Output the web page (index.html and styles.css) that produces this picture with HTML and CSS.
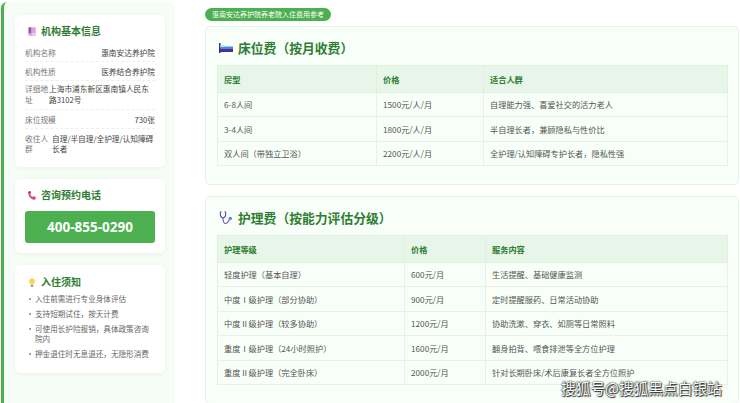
FILE: index.html
```html
<!DOCTYPE html>
<html lang="zh-CN">
<head>
  <meta charset="UTF-8">
  <title>惠南安达养护院养老院入住费用参考</title>
  <link rel="stylesheet" href="styles.css">
</head>
<body>
  <div class="page">
    <aside class="sidebar">
      <div class="side-card info-card">
        <h3 class="side-title">
          <svg class="side-icon" viewBox="0 0 12 12"><rect x="1.5" y="1" width="9" height="10" rx="1" fill="#d8a6dc"/><rect x="2" y="1" width="3" height="7" fill="#8e5aa8"/><rect x="6" y="8" width="4" height="2" fill="#f0d4f0"/></svg>
          机构基本信息
        </h3>
        <div class="info-row"><span class="info-label">机构名称</span><span class="info-value">惠南安达养护院</span></div>
        <div class="info-row"><span class="info-label">机构性质</span><span class="info-value">医养结合养护院</span></div>
        <div class="info-row wrap"><span class="info-label short">详细地址</span><span class="info-value">上海市浦东新区惠南镇人民东路3102号</span></div>
        <div class="info-row"><span class="info-label">床位规模</span><span class="info-value">730张</span></div>
        <div class="info-row wrap last"><span class="info-label short">收住人群</span><span class="info-value">自理/半自理/全护理/认知障碍长者</span></div>
      </div>

      <div class="side-card phone-card">
        <h3 class="side-title">
          <svg class="side-icon" viewBox="0 0 12 12"><path d="M2.2 1.2 4 .8l1 2.6-1.2 1c.5 1.4 1.6 2.6 3 3.3l1.2-1 2.6 1.4-.5 2.4c-.2.6-.8.8-1.4.7C4.600 10.400 1.800 7 1.300 2.600c-.1-.6.300-1.200.9-1.400z" fill="#e0457e"/><path d="M2.200 1.200 4 .8l.6 1.500-2.500.8c-.1-.9 0-1.700.1-1.900z" fill="#7a3b52"/></svg>
          咨询预约电话
        </h3>
        <div class="phone-number">400-855-0290</div>
      </div>

      <div class="side-card notice-card">
        <h3 class="side-title">
          <svg class="side-icon" viewBox="0 0 12 12"><path d="M6 .8a3.700 3.700 0 0 0-2.200 6.600c.5.4.6 1 .6 1.400h3.200c0-.4.1-1 .6-1.400A3.700 3.700 0 0 0 6 .8z" fill="#fbd25a"/><rect x="4.500" y="9" width="3" height="2.200" rx=".7" fill="#8f7bb5"/></svg>
          入住须知
        </h3>
        <ul class="notice-list">
          <li>入住前需进行专业身体评估</li>
          <li>支持短期试住，按天计费</li>
          <li>可使用长护险报销，具体政策咨询院内</li>
          <li>押金退住时无息退还，无隐形消费</li>
        </ul>
      </div>
    </aside>

    <main class="content">
      <div class="tag">惠南安达养护院养老院入住费用参考</div>

      <section class="fee-section">
        <h2 class="fee-title">
          <svg class="fee-icon" viewBox="0 0 14 10"><rect x="0" y="0" width="1.500" height="10" fill="#3d2a78"/><rect x="1" y="5" width="13" height="4" fill="#4b2f8f"/><rect x="1.500" y="3.500" width="12.500" height="2.500" rx=".6" fill="#3f8fe0"/><rect x="1.500" y="2" width="4" height="2" rx=".8" fill="#bfe0f5"/></svg>
          床位费（按月收费）
        </h2>
        <table class="fee-table bed-table">
          <thead>
            <tr><th>房型</th><th>价格</th><th>适合人群</th></tr>
          </thead>
          <tbody>
            <tr><td>6-8人间</td><td>1500元/人/月</td><td>自理能力强、喜爱社交的活力老人</td></tr>
            <tr><td>3-4人间</td><td>1800元/人/月</td><td>半自理长者，兼顾隐私与性价比</td></tr>
            <tr><td>双人间（带独立卫浴）</td><td>2200元/人/月</td><td>全护理/认知障碍专护长者，隐私性强</td></tr>
          </tbody>
        </table>
      </section>

      <section class="fee-section">
        <h2 class="fee-title">
          <svg class="fee-icon tall" viewBox="0 0 14 14"><path d="M2.500 1H1.500C1 3.500 1.200 6.500 4 7c2.800-.5 3-3.500 2.500-6h-1" fill="none" stroke="#5a46a8" stroke-width="1.100"/><path d="M4 7c0 3 .5 5.500 2.800 5.500S9.500 10 10.500 8.500" fill="none" stroke="#6a56b8" stroke-width="1.100"/><circle cx="11.300" cy="7.400" r="1.700" fill="#3f8fe0"/></svg>
          护理费（按能力评估分级）
        </h2>
        <table class="fee-table care-table">
          <thead>
            <tr><th>护理等级</th><th>价格</th><th>服务内容</th></tr>
          </thead>
          <tbody>
            <tr><td>轻度护理（基本自理）</td><td>600元/月</td><td>生活提醒、基础健康监测</td></tr>
            <tr><td>中度Ⅰ级护理（部分协助）</td><td>900元/月</td><td>定时提醒服药、日常活动协助</td></tr>
            <tr><td>中度Ⅱ级护理（较多协助）</td><td>1200元/月</td><td>协助洗漱、穿衣、如厕等日常照料</td></tr>
            <tr><td>重度Ⅰ级护理（24小时照护）</td><td>1600元/月</td><td>翻身拍背、喂食排泄等全方位护理</td></tr>
            <tr><td>重度Ⅱ级护理（完全卧床）</td><td>2000元/月</td><td>针对长期卧床/术后康复长者全方位照护</td></tr>
          </tbody>
        </table>
      </section>
    </main>
  </div>
  <div class="watermark">搜狐号@搜狐黑点白银站</div>
</body>
</html>
```

FILE: styles.css
```css
html, body {
  margin: 0;
  height: 403px;
  overflow: hidden;
  background-color: #fff;
}

body {
  font-family: "Noto Sans CJK SC", "Noto Sans", sans-serif;
  color: #555;
  position: relative;
  text-spacing-trim: space-all;
}

.page {
  display: flex;
  align-items: flex-start;
  gap: 30px;
  padding-left: 1px;
}

/* sidebar */
.sidebar {
  width: 174px;
  height: 408px;
  flex-shrink: 0;
  margin-top: 2px;
  padding: 13px 10px 0 11px;
  box-sizing: border-box;
  background-color: #f5fdf6;
  border-left: 3px solid #4caf50;
  border-radius: 6px;
  display: flex;
  flex-direction: column;
  gap: 12px;
}

.side-card {
  background-color: #fff;
  border-radius: 5px;
  padding: 9px 10px;
  box-shadow: 0 1px 5px rgba(0, 0, 0, 0.05);
}

.side-title {
  display: flex;
  align-items: center;
  gap: 4px;
  margin: 0 0 5px;
  padding-left: 2px;
  font-size: 10px;
  line-height: 14px;
  font-weight: 700;
  color: #2e7d32;
}

.side-icon {
  width: 10px;
  height: 11px;
}

.info-card {
  height: 152px;
  box-sizing: border-box;
}

.info-row {
  display: flex;
  justify-content: space-between;
  padding: 4px 0 2px;
  border-bottom: 1px dashed #eee;
  font-size: 7.700px;
  line-height: 12px;
}

.info-row.wrap {
  justify-content: flex-start;
  padding: 2px 0 4px;
  line-height: 11px;
}

.info-row.last {
  gap: 3px;
  padding-top: 5px;
  line-height: 10px;
  border-bottom: none;
}

.info-label {
  color: #777;
  flex-shrink: 0;
}

.info-label.short {
  width: 24px;
}

.info-value {
  color: #444;
}

.phone-card {
  height: 74px;
  box-sizing: border-box;
}

.phone-number {
  margin-top: 9px;
  height: 32px;
  background-color: #4caf50;
  border-radius: 3px;
  color: #fff;
  font-family: "Open Sans", sans-serif;
  font-size: 13.500px;
  font-weight: 700;
  line-height: 32px;
  text-align: center;
}

.notice-card {
  height: 108px;
  box-sizing: border-box;
  padding-top: 10px;
}

.notice-list {
  margin: 0;
  padding: 0 0 0 10px;
  list-style: none;
  font-size: 7.600px;
  line-height: 10px;
  color: #666;
}

.notice-list li {
  position: relative;
  margin-bottom: 5px;
}

.notice-list li::before {
  content: "";
  position: absolute;
  left: -6px;
  top: 4px;
  width: 2px;
  height: 2px;
  border-radius: 50%;
  background-color: #4caf50;
}

/* main column */
.content {
  width: 534px;
  flex-shrink: 0;
  padding-top: 8px;
}

.tag {
  width: fit-content;
  height: 13px;
  padding: 0 7px;
  background-color: #4caf50;
  border-radius: 7px;
  color: #fff;
  font-size: 7px;
  line-height: 13px;
}

.fee-section {
  margin-top: 5px;
  padding: 12px 10px 18px 11px;
  background-color: #f8fff9;
  border: 1px solid #e4f3e6;
  border-radius: 5px;
}

.fee-section + .fee-section {
  margin-top: 11px;
}

.fee-title {
  display: flex;
  align-items: center;
  gap: 5px;
  height: 18px;
  margin: 0 0 8px;
  padding-left: 2px;
  font-size: 12.800px;
  line-height: 18px;
  font-weight: 700;
  color: #2e7d32;
}

.fee-icon {
  width: 14px;
  height: 10px;
}

.fee-icon.tall {
  height: 14px;
}

.fee-table {
  width: 511px;
  border-collapse: collapse;
  table-layout: fixed;
  font-size: 8.200px;
}

.fee-table th,
.fee-table td {
  padding: 0 6px;
  border: 1px solid #e8f0e9;
  text-align: left;
}

.fee-table th {
  height: 25.500px;
  background-color: #e8f5e9;
  border-color: #dff0e1;
  color: #2e7d32;
  font-weight: 700;
}

.fee-table td {
  height: 23.500px;
  color: #555;
}

.bed-table th:nth-child(1) { width: 146px; }
.bed-table th:nth-child(2) { width: 94px; }

.care-table th:nth-child(1) { width: 174px; }
.care-table th:nth-child(2) { width: 68px; }

.watermark {
  position: absolute;
  left: 561px;
  top: 377px;
  color: #fff;
  font-size: 14.700px;
  line-height: 21px;
  white-space: nowrap;
  text-shadow: 0 0 2px #222, 0 0 1px #222, 1px 1px 1px #333;
}
```
